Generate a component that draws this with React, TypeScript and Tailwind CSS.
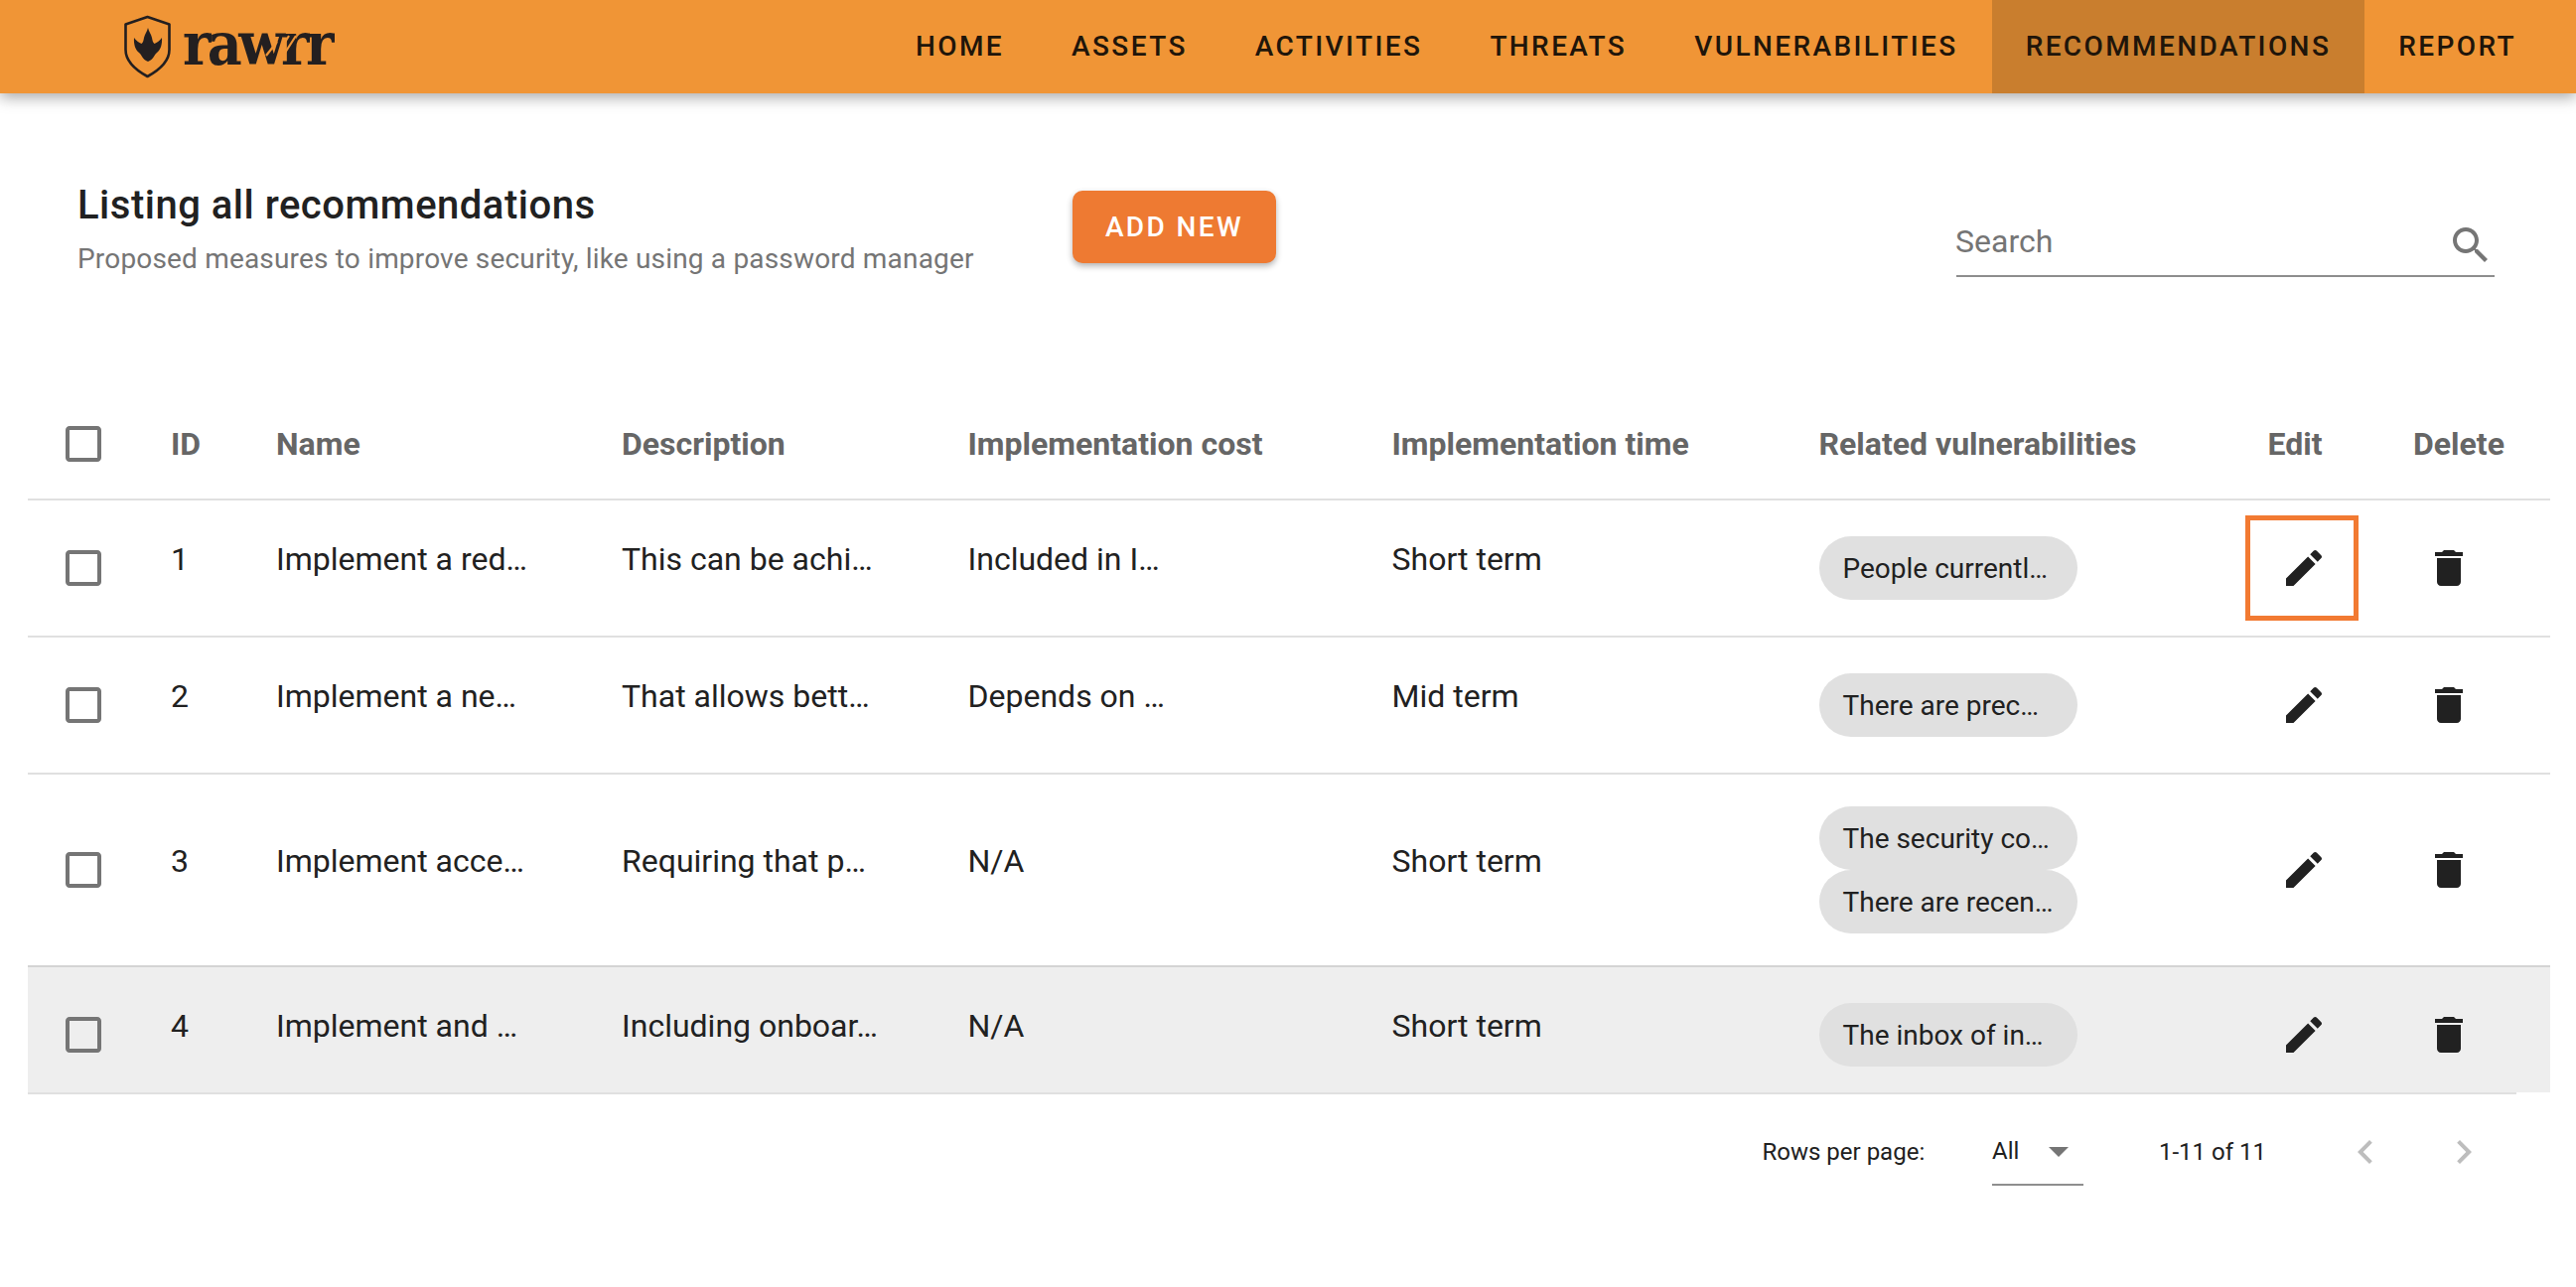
import React from "react";

const ICON = {
  edit: "M3 17.25V21h3.75L17.81 9.94l-3.75-3.75L3 17.25zM20.71 7.04c.39-.39.39-1.02 0-1.41l-2.34-2.34c-.39-.39-1.02-.39-1.41 0l-1.83 1.83 3.75 3.75 1.83-1.83z",
  del: "M6 19c0 1.1.9 2 2 2h8c1.1 0 2-.9 2-2V7H6v12zM19 4h-3.5l-1-1h-5l-1 1H5v2h14V4z",
  box: "M19 5v14H5V5h14m0-2H5c-1.1 0-2 .9-2 2v14c0 1.1.9 2 2 2h14c1.1 0 2-.9 2-2V5c0-1.1-.9-2-2-2z",
  search: "M15.5 14h-.79l-.28-.27C15.41 12.59 16 11.11 16 9.5 16 5.91 13.09 3 9.5 3S3 5.91 3 9.5 5.91 16 9.5 16c1.61 0 3.09-.59 4.23-1.57l.27.28v.79l5 4.99L20.49 19l-4.99-5zm-6 0C7.01 14 5 11.99 5 9.5S7.01 5 9.5 5 14 7.01 14 9.5 11.99 14 9.5 14z",
  left: "M15.41 7.41L14 6l-6 6 6 6 1.41-1.41L10.83 12z",
  right: "M10 6L8.59 7.41 13.17 12l-4.58 4.59L10 18l6-6z",
  drop: "M7 10l5 5 5-5z",
};

function Icon({ d, className }: { d: string; className: string }) {
  return (
    <svg viewBox="0 0 24 24" className={`w-[48px] h-[48px] shrink-0 fill-current ${className}`}>
      <path d={d} />
    </svg>
  );
}

const NAV = ["HOME", "ASSETS", "ACTIVITIES", "THREATS", "VULNERABILITIES", "RECOMMENDATIONS", "REPORT"];

const ROWS = [
  { id: "1", name: "Implement a red…", desc: "This can be achi…", cost: "Included in I…", time: "Short term", chips: ["People currentl…"], h: "h-[138px]", line: "border-b-2 border-[#e0e0e0]", bg: "", pad: "" },
  { id: "2", name: "Implement a ne…", desc: "That allows bett…", cost: "Depends on …", time: "Mid term", chips: ["There are prec…"], h: "h-[138px]", line: "border-b-2 border-[#e0e0e0]", bg: "", pad: "" },
  { id: "3", name: "Implement acce…", desc: "Requiring that p…", cost: "N/A", time: "Short term", chips: ["The security co…", "There are recen…"], h: "h-[194px]", line: "border-b-2 border-[#d4d4d4]", bg: "", pad: "" },
  { id: "4", name: "Implement and …", desc: "Including onboar…", cost: "N/A", time: "Short term", chips: ["The inbox of in…"], h: "h-[127px]", line: "", bg: "bg-[#eeeeee]", pad: "pt-[10px]" },
];

const HEAD = ["ID", "Name", "Description", "Implementation cost", "Implementation time", "Related vulnerabilities", "Edit", "Delete"];

function Logo() {
  return (
    <div className="relative flex items-center ml-[122px] h-full">
      <svg viewBox="0 0 54 66" className="w-[54px] h-[66px] shrink-0 mt-[-1px]">
        <path d="M27 3 L49 10.5 V36 C49 48 38 57 27 63 C16 57 5 48 5 36 V10.5 Z" transform="translate(-0.5 0)" fill="none" stroke="#231f20" strokeWidth="2.6" strokeLinejoin="round" />
        <path d="M27 14 C28 18 30 20 31 24 C31.5 27 32 29 33.5 30 C36 29 39 27 41 24 C41.5 30 40 36 36 39 C33 41 33 46 27 48 C21 46 21 41 18 39 C14 36 12.5 30 13 24 C15 27 18 29 20.5 30 C22 29 22.5 27 23 24 C24 20 26 18 27 14 Z" fill="#231f20" />
      </svg>
      <div className="relative ml-[8px] mt-[-6px]">
        <span className="block text-[60px] leading-none font-bold tracking-[-3.6px] text-[#231f20] [font-family:'DejaVu_Serif_Condensed','DejaVu_Serif',serif]">
          rawrr
        </span>
        <svg viewBox="0 0 160 66" className="absolute left-0 top-[-4px] w-[160px] h-[66px]">
          <path d="M84 46 L95 32 M96 54 L114 26 M102 34 L107 26" fill="none" stroke="#f09536" strokeWidth="2.2" />
        </svg>
      </div>
    </div>
  );
}

export default function App() {
  return (
    <div className="w-[2594px] h-[1296px] overflow-hidden bg-white text-[#212121] font-['Roboto',sans-serif]">
      <header className="relative z-10 flex justify-between h-[94px] bg-[#f09536] shadow-[0_4px_14px_rgba(0,0,0,0.35)]">
        <Logo />
        <nav className="flex mr-[26px]">
          {NAV.map((n) => (
            <div
              key={n}
              className={`flex items-center px-[34px] text-[28px] font-medium tracking-[2.4px] text-[#20150a] ${n === "RECOMMENDATIONS" ? "bg-[#c97e2e]" : ""}`}
            >
              {n}
            </div>
          ))}
        </nav>
      </header>

      <section className="flex h-[297px] pl-[78px] pr-[82px]">
        <div className="w-[1002px] pt-[89px]">
          <h1 className="text-[40px] leading-[48px] font-medium tracking-[0.5px] text-[#212121]">Listing all recommendations</h1>
          <p className="mt-[14px] text-[28px] leading-[32px] tracking-[0.18px] text-[#757575]">
            Proposed measures to improve security, like using a password manager
          </p>
        </div>
        <button className="mt-[98px] w-[205px] h-[73px] rounded-[10px] bg-[#ee7a32] text-white text-[28px] font-medium tracking-[2.4px] shadow-[0_3px_6px_rgba(0,0,0,0.3)]">
          ADD NEW
        </button>
        <div className="ml-auto mt-[126px] w-[542px] h-[59px] flex items-center justify-between border-b-2 border-[#8e8e8e] text-[#757575]">
          <span className="text-[32px] mt-[-11px] ml-[-1px]">Search</span>
          <Icon d={ICON.search} className="mt-[-4px]" />
        </div>
      </section>

      <div className="ml-[28px] w-[2540px]">
        <table className="w-[2540px] table-fixed">
          <colgroup>
            <col className="w-[144px]" />
            <col className="w-[106px]" />
            <col className="w-[348px]" />
            <col className="w-[348.5px]" />
            <col className="w-[427px]" />
            <col className="w-[430px]" />
            <col className="w-[452px]" />
            <col className="w-[146.5px]" />
            <col className="w-[138px]" />
          </colgroup>
          <thead>
            <tr className="h-[112px]">
              <th className="border-b-2 border-[#e0e0e0] pl-[32px] text-left">
                <Icon d={ICON.box} className="text-[#757575]" />
              </th>
              {HEAD.map((h) => (
                <th key={h} className="border-b-2 border-[#e0e0e0] text-left text-[32px] font-bold text-[#666666] whitespace-nowrap">
                  {h}
                </th>
              ))}
            </tr>
          </thead>
          <tbody>
            {ROWS.map((r) => {
              const cell = `${r.line} ${r.pad} p-0 align-middle`;
              const text = `${cell} text-[32px]`;
              const T = ({ v }: { v: string }) => (
                <td className={text}>
                  <div className="pb-[18px] whitespace-nowrap">{v}</div>
                </td>
              );
              return (
                <tr key={r.id} className={`${r.h} ${r.bg}`}>
                  <td className={`${cell} pl-[32px]`}>
                    <Icon d={ICON.box} className="text-[#757575]" />
                  </td>
                  <T v={r.id} />
                  <T v={r.name} />
                  <T v={r.desc} />
                  <T v={r.cost} />
                  <T v={r.time} />
                  <td className={cell}>
                    {r.chips.map((c) => (
                      <div
                        key={c}
                        className="flex items-center w-[260px] h-[64px] pl-[24px] pt-[2px] rounded-full bg-[#e0e0e0] text-[28px] whitespace-nowrap"
                      >
                        {c}
                      </div>
                    ))}
                  </td>
                  <td className={`${cell} pl-[12px]`}>
                    <div className="relative w-[48px] h-[48px]">
                      <Icon d={ICON.edit} className="text-[#212121]" />
                      {r.id === "1" && (
                        <div className="absolute left-[-35px] top-[-29px] w-[114px] h-[106px] border-[5px] border-[#f27a32]" />
                      )}
                    </div>
                  </td>
                  <td className={`${cell} pl-[12px]`}>
                    <Icon d={ICON.del} className="text-[#212121]" />
                  </td>
                </tr>
              );
            })}
          </tbody>
        </table>

        <div className="flex items-center justify-end h-[118px] w-[2506px] pr-[29px] border-t-2 border-[#e0e0e0] text-[24px] text-[#212121]">
          <span className="w-[231.5px]">Rows per page:</span>
          <div className="relative flex items-center w-[92px] h-[68px] border-b-2 border-[#8e8e8e] mr-[76px]">
            <span>All</span>
            <Icon d={ICON.drop} className="absolute left-[43px] top-[9px] text-[#757575]" />
          </div>
          <span className="w-[183.5px]">1-11 of 11</span>
          <Icon d={ICON.left} className="text-[#bdbdbd]" />
          <Icon d={ICON.right} className="ml-[51.5px] text-[#bdbdbd]" />
        </div>
      </div>
    </div>
  );
}
